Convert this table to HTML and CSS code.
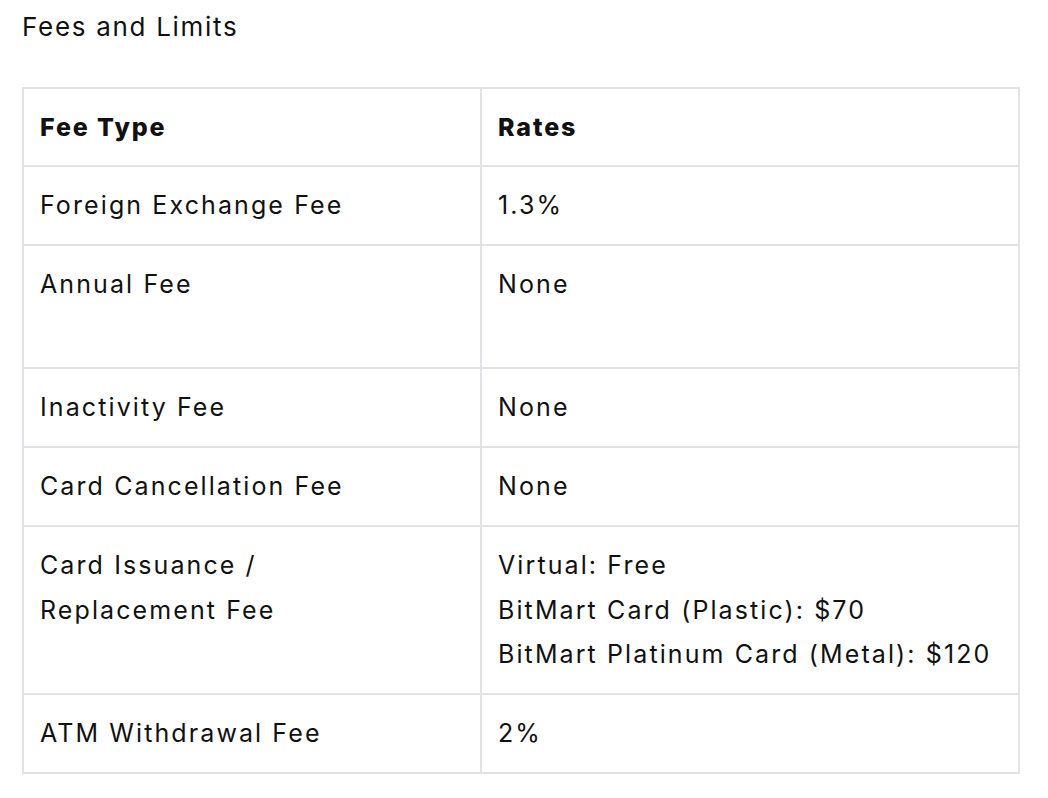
FILE: index.html
```html
<!DOCTYPE html>
<html lang="en">
<head>
    <meta charset="UTF-8">
    <title>Fees and Limits</title>
    <link rel="stylesheet" href="styles.css">
</head>
<body>
<div class="fees">
    <h3 class="fees-title">Fees and Limits</h3>

    <table class="fees-table">
        <colgroup>
            <col class="col-type">
            <col class="col-rate">
        </colgroup>
        <tr>
            <th>Fee Type</th>
            <th>Rates</th>
        </tr>
        <tr>
            <td>Foreign Exchange Fee</td>
            <td>1.3%</td>
        </tr>
        <tr>
            <td>Annual Fee<br>&nbsp;</td>
            <td>None</td>
        </tr>
        <tr>
            <td>Inactivity Fee</td>
            <td>None</td>
        </tr>
        <tr>
            <td>Card Cancellation Fee</td>
            <td>None</td>
        </tr>
        <tr>
            <td>Card Issuance /<br>Replacement Fee</td>
            <td>Virtual: Free<br>BitMart Card (Plastic): $70<br>BitMart Platinum Card (Metal): $120</td>
        </tr>
        <tr>
            <td>ATM Withdrawal Fee</td>
            <td>2%</td>
        </tr>
    </table>
</div>
</body>
</html>
```

FILE: styles.css
```css
body {
    margin: 0;
    background-color: #fff;
    color: #111;
    font-family: Inter, 'Open Sans', sans-serif;
}

.fees {
    padding: 0 28px 0 22px;
}

.fees-title {
    margin: 0;
    padding-top: 8px;
    font-size: 26px;
    font-weight: 400;
    line-height: 38px;
    letter-spacing: 1.7px;
}

.fees-table {
    margin-top: 41px;
    width: 998px;
    border-collapse: collapse;
    table-layout: fixed;
    font-size: 25px;
    line-height: 44.5px;
    letter-spacing: 2.1px;
}

.col-type {
    width: 458px;
}

.fees-table th,
.fees-table td {
    border: 2px solid #e2e2e6;
    padding: 16px 16px 16.4px;
    text-align: left;
    vertical-align: top;
}

.fees-table th {
    padding-bottom: 15.5px;
    font-weight: 800;
    letter-spacing: 1.9px;
}
```
